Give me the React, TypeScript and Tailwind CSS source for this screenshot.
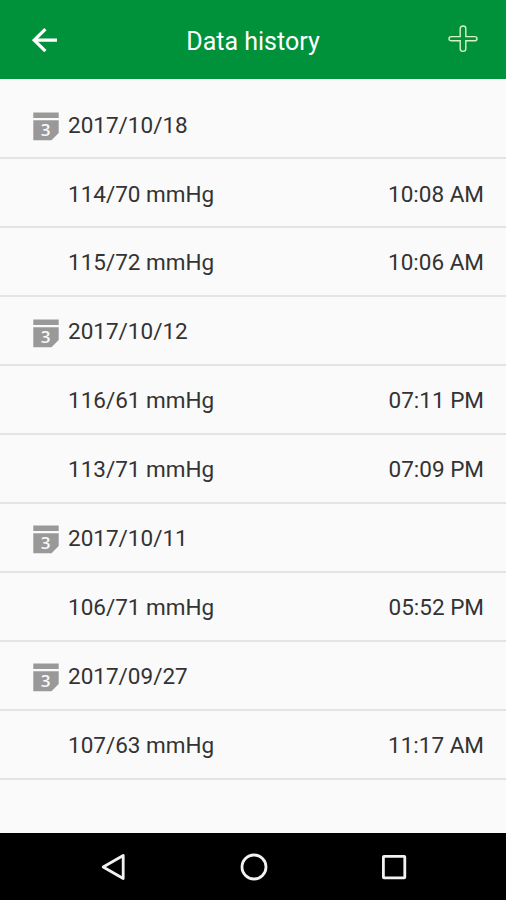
type Reading = { value: string; time: string };
type Day = { date: string; readings: Reading[] };

const days: Day[] = [
  {
    date: "2017/10/18",
    readings: [
      { value: "114/70", time: "10:08 AM" },
      { value: "115/72", time: "10:06 AM" },
    ],
  },
  {
    date: "2017/10/12",
    readings: [
      { value: "116/61", time: "07:11 PM" },
      { value: "113/71", time: "07:09 PM" },
    ],
  },
  { date: "2017/10/11", readings: [{ value: "106/71", time: "05:52 PM" }] },
  { date: "2017/09/27", readings: [{ value: "107/63", time: "11:17 AM" }] },
];

function BackIcon() {
  return (
    <svg width="26" height="26" viewBox="0 0 26 26" fill="none" stroke="white" strokeWidth="3.2">
      <path d="M25 13.2H2.5M13.4 2.2L2.2 13.2L13.4 24.2" />
    </svg>
  );
}

function PlusIcon() {
  return (
    <svg width="30" height="28" viewBox="0 0 30 28" fill="none" stroke="#d9f2c4" strokeWidth="1.4">
      <path d="M12.2 3.6Q12.2 1 15 1T17.8 3.6V11.6H26.6Q29 11.6 29 13.7T26.6 15.8H17.8V23.8Q17.8 26.4 15 26.4T12.2 23.8V15.8H3.4Q1 15.8 1 13.7T3.4 11.6H12.2Z" />
    </svg>
  );
}

function CalendarIcon() {
  return (
    <svg width="26" height="29" viewBox="0 0 26 29">
      <path d="M0.3 0.5H25.7V6H0.3ZM0.3 8.2H25.7V21L18.5 28.3H0.3Z" fill="#999" />
      <text
        x="12.7"
        y="24.2"
        textAnchor="middle"
        fill="#fafafa"
        className="font-['Open_Sans',sans-serif] text-[17px] font-semibold"
      >
        3
      </text>
    </svg>
  );
}

export default function App() {
  return (
    <div className="flex h-[900px] w-[506px] flex-col overflow-hidden bg-[#fafafa] font-['Roboto',sans-serif] text-[#333]">
      {/* App bar */}
      <header className="flex h-[79px] shrink-0 items-center justify-between bg-[#00923a] pr-[28px] pl-[32px]">
        <button type="button" aria-label="Back">
          <BackIcon />
        </button>
        <h1 className="pt-[4px] text-[25px] text-white">Data history</h1>
        <button type="button" aria-label="Add" className="pb-[2px]">
          <PlusIcon />
        </button>
      </header>

      {/* History list */}
      <main className="flex-1 pt-[11.6px] text-[22.5px]">
        {days.map((day) => (
          <section key={day.date}>
            <div className="flex h-[68.9px] items-center border-b-2 border-[#e4e4e4] pt-[3px] pl-[33px]">
              <div className="pt-[2px]">
                <CalendarIcon />
              </div>
              <h2 className="pl-[9px]">{day.date}</h2>
            </div>
            {day.readings.map((reading) => (
              <div
                key={reading.time}
                className="flex h-[68.9px] items-center justify-between border-b-2 border-[#e4e4e4] pt-[3px] pr-[22px] pl-[68px]"
              >
                <span>{reading.value} mmHg</span>
                <span>{reading.time}</span>
              </div>
            ))}
          </section>
        ))}
      </main>

      {/* System navigation */}
      <nav className="flex h-[67px] shrink-0 items-center justify-between bg-black pr-[99px] pl-[100px]">
        <svg width="26" height="30" viewBox="0 0 26 30" fill="none" stroke="#f2f2f2" strokeWidth="2.8">
          <path d="M23.2 3.5V26.5L3.2 15Z" strokeLinejoin="round" />
        </svg>
        <svg width="28" height="28" viewBox="0 0 28 28" fill="none" stroke="#f2f2f2" strokeWidth="2.8">
          <circle cx="14" cy="14" r="12" />
        </svg>
        <svg width="26" height="26" viewBox="0 0 26 26" fill="none" stroke="#f2f2f2" strokeWidth="2.8">
          <rect x="2.4" y="2.4" width="21.4" height="21.4" rx="0.6" />
        </svg>
      </nav>
    </div>
  );
}
